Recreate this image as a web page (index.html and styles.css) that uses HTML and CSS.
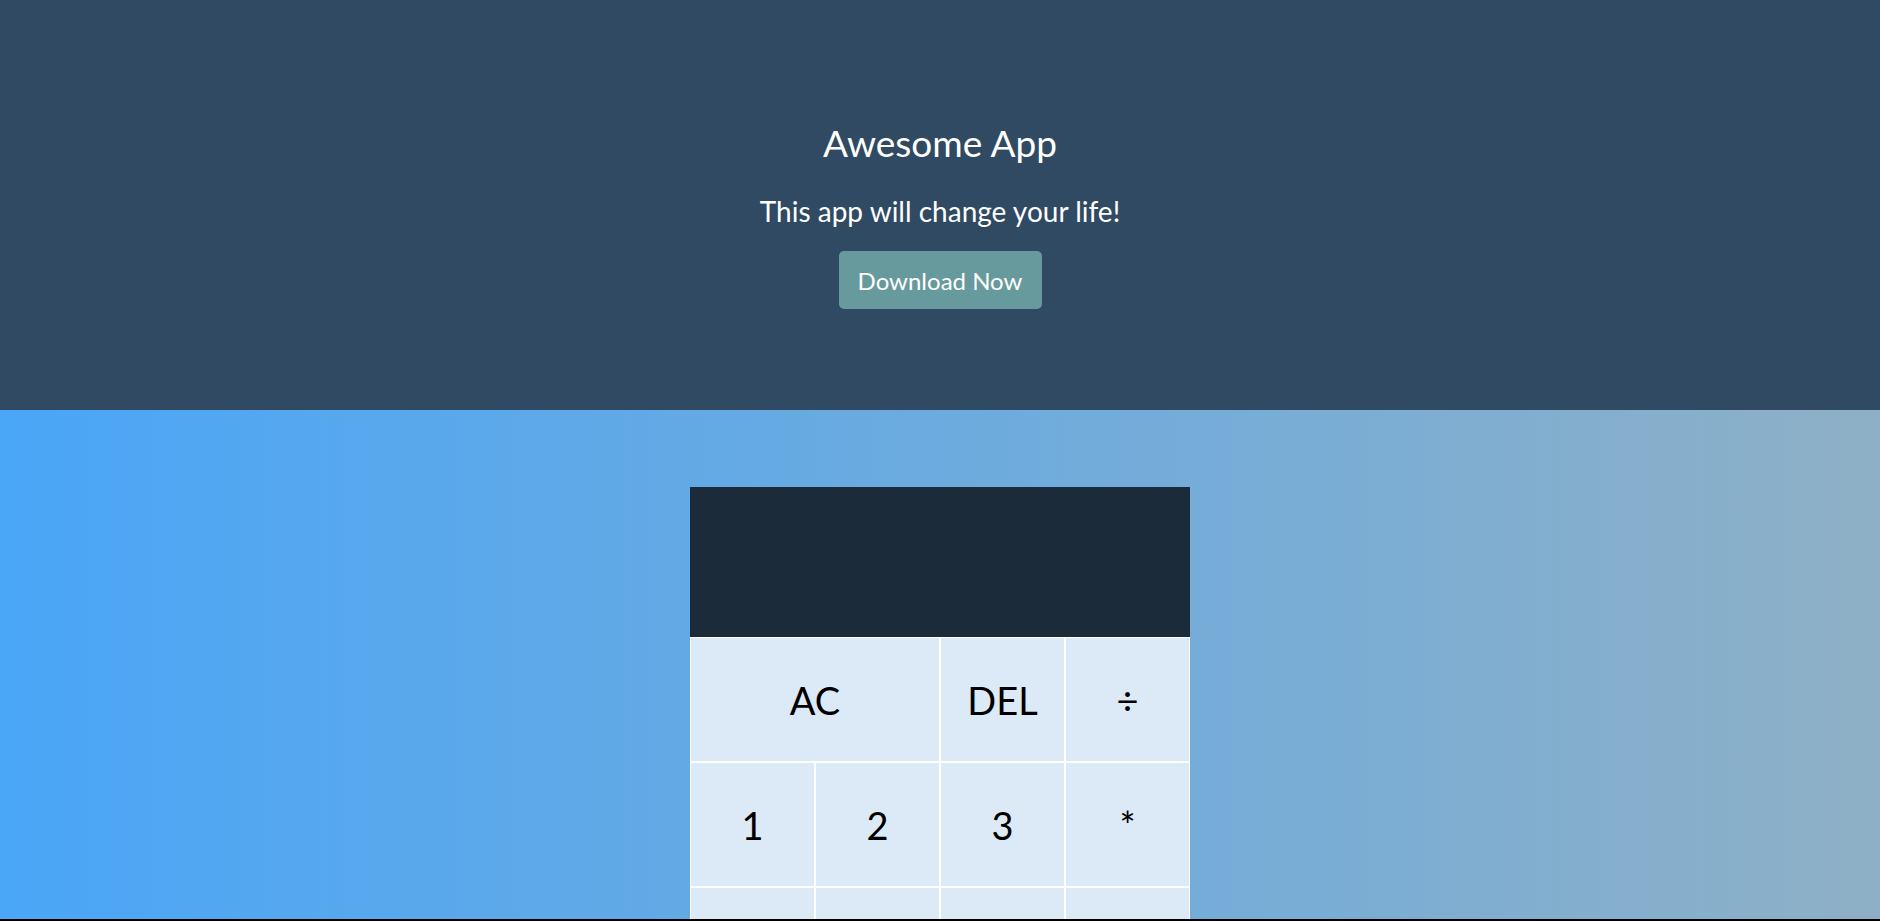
FILE: index.html
```html
<!DOCTYPE html>
<html lang="en">
<head>
<meta charset="utf-8">
<title>Awesome App</title>
<link rel="stylesheet" href="styles.css">
</head>
<body>
<header class="hero">
  <h1 class="hero-title">Awesome App</h1>
  <p class="hero-sub">This app will change your life!</p>
  <a class="hero-btn" href="#">Download Now</a>
</header>
<section class="calc-section">
  <div class="calc">
    <div class="output"></div>
    <button class="key span-2">AC</button>
    <button class="key">DEL</button>
    <button class="key">÷</button>
    <button class="key">1</button>
    <button class="key">2</button>
    <button class="key">3</button>
    <button class="key">*</button>
    <button class="key">4</button>
    <button class="key">5</button>
    <button class="key">6</button>
    <button class="key">+</button>
    <button class="key">7</button>
    <button class="key">8</button>
    <button class="key">9</button>
    <button class="key">-</button>
    <button class="key">.</button>
    <button class="key">0</button>
    <button class="key span-2">=</button>
  </div>
</section>
</body>
</html>
```
FILE: styles.css
```css
* { box-sizing: border-box; }
html, body { margin: 0; padding: 0; }
body {
  font-family: Lato, "Open Sans", sans-serif;
  background: #000;
  height: 921px;
  overflow: hidden;
}
.hero {
  height: 410px;
  background: #2f4a62;
  color: #fff;
  display: flex;
  flex-direction: column;
  align-items: center;
  padding-top: 121px;
}
.hero-title {
  margin: 0;
  font-size: 37px;
  line-height: 44px;
  font-weight: 400;
}
.hero-sub {
  margin: 29px 0 0;
  font-size: 28px;
  line-height: 34px;
}
.hero-btn {
  margin-top: 23px;
  width: 203px;
  height: 58px;
  display: flex;
  align-items: center;
  justify-content: center;
  background: #679a9c;
  color: #fff;
  text-decoration: none;
  border-radius: 5px;
  font-size: 24px;
}
.calc-section {
  height: 509px;
  overflow: hidden;
  background: linear-gradient(to right, #4aa6f7, #8eb0c6);
  display: flex;
  justify-content: center;
  padding-top: 77px;
}
.calc {
  display: grid;
  grid-template-columns: repeat(4, 125px);
  grid-template-rows: 150px repeat(5, 125px);
  align-content: start;
}
.output {
  grid-column: 1 / -1;
  background: #1c2b3a;
}
.key {
  font-family: inherit;
  font-size: 38px;
  color: #000;
  background: #dbeaf6;
  border: 1px solid #fff;
  padding: 0;
  cursor: pointer;
}
.span-2 { grid-column: span 2; }
```
